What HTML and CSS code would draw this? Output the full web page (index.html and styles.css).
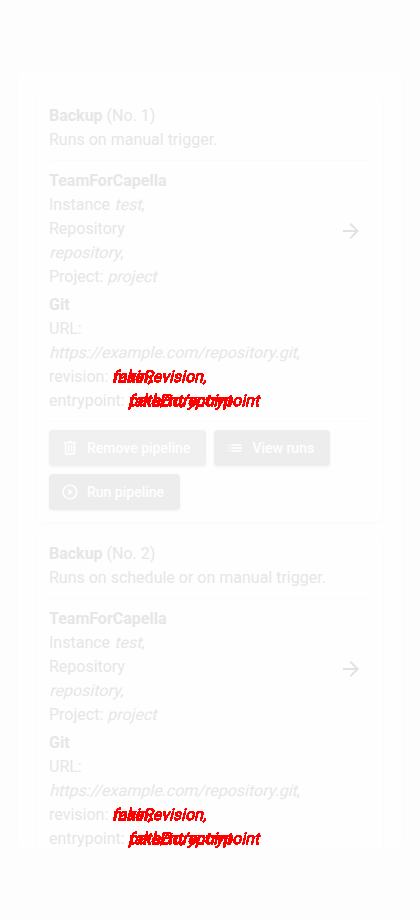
FILE: index.html
```html
<!DOCTYPE html>
<html lang="en">
<head>
<meta charset="utf-8">
<title>Pipelines</title>
<link rel="stylesheet" href="styles.css">
</head>
<body>
<svg class="defs" aria-hidden="true">
  <filter id="solid" x="-5%" y="-20%" width="110%" height="140%" color-interpolation-filters="sRGB"><feComponentTransfer><feFuncR type="linear" slope="0" intercept="1"/><feFuncG type="linear" slope="0" intercept="0"/><feFuncB type="linear" slope="0" intercept="0"/><feFuncA type="discrete" tableValues="0 1 1 1 1 1 1 1 1 1 1 1"/></feComponentTransfer></filter>
  <symbol id="arrow" viewBox="0 -960 960 960"><path d="M647-440H160v-80h487L423-744l57-56 320 320-320 320-57-56 224-224Z"/></symbol>
  <symbol id="trash" viewBox="0 -960 960 960"><path d="M280-120q-33 0-56.500-23.500T200-200v-520h-40v-80h200v-40h240v40h200v80h-40v520q0 33-23.500 56.500T680-120H280Zm400-600H280v520h400v-520ZM360-280h80v-360h-80v360Zm160 0h80v-360h-80v360Z"/></symbol>
  <symbol id="list" viewBox="0 0 24 24"><path d="M3 7h2v2H3zm4 0h14v2H7zM3 11h2v2H3zm4 0h14v2H7zM3 15h2v2H3zm4 0h14v2H7z"/></symbol>
  <symbol id="play" viewBox="0 0 24 24"><path d="M10 16.500l6-4.500-6-4.500v9zM12 2C6.480 2 2 6.480 2 12s4.480 10 10 10 10-4.480 10-10S17.520 2 12 2zm0 18c-4.410 0-8-3.590-8-8s3.590-8 8-8 8 3.590 8 8-3.590 8-8 8z"/></symbol>
</svg>
<main class="dialog">
  <section class="card">
    <div class="head"><b>Backup</b> (No. 1)<br>Runs on manual trigger.</div>
    <div class="body">
      <div class="info">
        <div class="block"><b>TeamForCapella</b><br>Instance <i>test</i>,<br>Repository<br><i>repository</i>,<br>Project: <i>project</i></div>
        <div class="block"><b>Git</b><br>URL:<br><i>https://example.com/repository.git</i>,<br>revision: <span class="change"><i>fakeRevision,</i><i class="over">main,</i></span><br>entrypoint: <span class="change"><i>path/to/entrypoint</i><i class="over">fakeEntrypoint</i></span></div>
      </div>
      <svg class="arrow"><use href="#arrow"/></svg>
    </div>
    <div class="actions">
      <button class="btn light"><svg><use href="#trash"/></svg>Remove pipeline</button>
      <button class="btn"><svg><use href="#list"/></svg>View runs</button>
      <button class="btn"><svg><use href="#play"/></svg>Run pipeline</button>
    </div>
  </section>
  <section class="card">
    <div class="head"><b>Backup</b> (No. 2)<br>Runs on schedule or on manual trigger.</div>
    <div class="body">
      <div class="info">
        <div class="block"><b>TeamForCapella</b><br>Instance <i>test</i>,<br>Repository<br><i>repository</i>,<br>Project: <i>project</i></div>
        <div class="block"><b>Git</b><br>URL:<br><i>https://example.com/repository.git</i>,<br>revision: <span class="change"><i>fakeRevision,</i><i class="over">main,</i></span><br>entrypoint: <span class="change"><i>path/to/entrypoint</i><i class="over">fakeEntrypoint</i></span></div>
      </div>
      <svg class="arrow"><use href="#arrow"/></svg>
    </div>
  </section>
</main>
</body>
</html>
```
FILE: styles.css
```css
* { box-sizing: border-box; }
body {
  margin: 0;
  height: 920px;
  overflow: hidden;
  padding: 72px 18px 72px 17px;
  background: #fdfdfd;
  color: #e6e6e6;
  font: 16px/24px Roboto, sans-serif;
}
i {
  display: inline-block;
  font-style: normal;
  transform: skewX(-14deg);
  transform-origin: 0 18px;
}
.defs { position: absolute; width: 0; height: 0; }
.dialog {
  height: 776px;
  overflow: hidden;
  padding: 20px 20px 0;
  background: #fefefe;
  border-radius: 4px;
  box-shadow: 0 0 2px #fbfbfb;
}
.card {
  width: 346px;
  padding: 12px;
  margin-bottom: 8px;
  background: #fefefe;
  border-radius: 8px;
  box-shadow: 0 1px 4px #fafafa;
}
.card:first-child { height: 430px; }
.head { padding-bottom: 8px; border-bottom: 1px solid #fbfbfb; }
.body { display: flex; align-items: center; justify-content: space-between; padding-top: 8px; position: relative; }
.info { white-space: nowrap; }
.block + .block { margin-top: 4px; }
.arrow { width: 24px; height: 24px; fill: #e2e2e2; position: absolute; left: 290px; top: 58px; }
.change { position: relative; display: inline-block; height: 24px; margin-left: -0.5px; vertical-align: top; color: #f00; -webkit-text-stroke: 0.3px #f00; filter: url(#solid); }
.over { position: absolute; left: 0; top: 0; }
.actions { display: flex; flex-wrap: wrap; gap: 8px; margin-top: 8px; padding-top: 8px; border-top: 1px solid #fbfbfb; }
.btn {
  display: flex;
  align-items: center;
  height: 36px;
  padding: 0 16px 0 12px;
  border: 0;
  border-radius: 4px;
  background: #ededed;
  color: #fff;
  font: 500 14px/20px Roboto, sans-serif;
  box-shadow: 0 1px 3px #f4f4f4;
}
.btn.light { background: #f0f0f0; }
.btn svg { width: 18px; height: 18px; margin-right: 8px; fill: #fff; }
```
